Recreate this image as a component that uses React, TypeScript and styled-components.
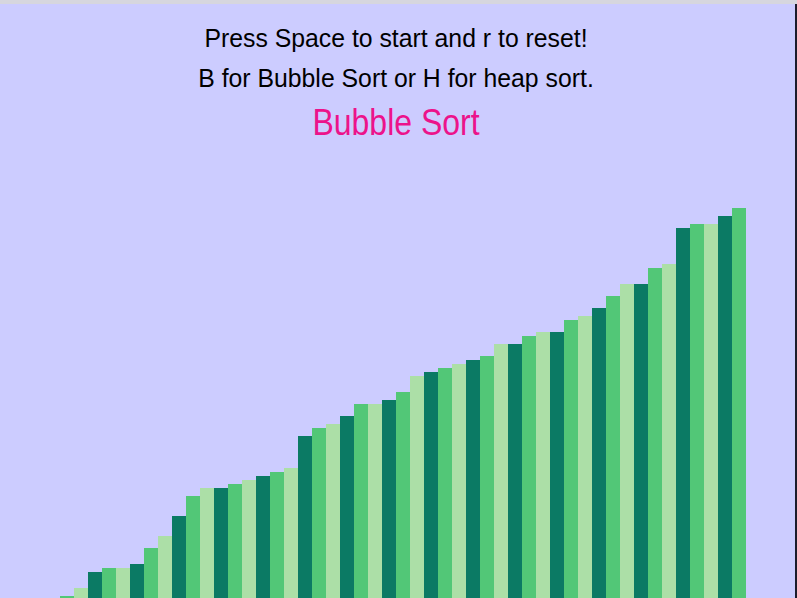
import React from "react";
import styled, { createGlobalStyle } from "styled-components";

const Global = createGlobalStyle`
  html, body { margin: 0; padding: 0; overflow: hidden; }
  body { font-family: "Liberation Sans", Arial, sans-serif; }
`;

const Page = styled.div`
  width: 797px;
  height: 598px;
  display: flex;
  flex-direction: column;
  background: #ccccff;
  overflow: hidden;
`;

const TopBand = styled.div`
  height: 4px;
  flex: none;
  background: #d6d6de;
`;

const Main = styled.div`
  flex: 1;
  display: flex;
  min-height: 0;
`;

const Canvas = styled.div`
  width: 795px;
  flex: none;
  display: flex;
  flex-direction: column;
  min-height: 0;
`;

const RightEdge = styled.div`
  width: 2px;
  flex: none;
  background: #1c1c2c;
`;

const Header = styled.div`
  padding: 15px 3px 0 0;
  display: flex;
  flex-direction: column;
  align-items: center;
  flex: none;
`;

const Line = styled.div`
  font-size: 24.8px;
  line-height: 40px;
  color: #000;
  white-space: nowrap;
  transform: scaleY(1.04);
`;

const Title = styled.div`
  font-size: 32px;
  line-height: 47px;
  color: #ec138b;
  white-space: nowrap;
  transform: scaleY(1.16);
`;

const Chart = styled.div`
  flex: 1;
  display: flex;
  align-items: flex-end;
  padding-left: 4px;
  min-height: 0;
  overflow: hidden;
`;

const palette = ["#0b7a64", "#52c777", "#acdfa7"];

const Bar = styled.div<{ $tone: number }>`
  width: 14px;
  flex: none;
  background: ${(p) => palette[p.$tone]};
`;

const tops = [
  598, 598, 598, 598, 596, 588, 572, 568, 568, 564, 548, 536, 516, 496, 488,
  488, 484, 480, 476, 472, 468, 436, 428, 424, 416, 404, 404, 400, 392, 376,
  372, 368, 364, 360, 356, 344, 344, 336, 332, 332, 320, 316, 308, 296, 284,
  284, 268, 264, 228, 224, 224, 216, 208,
];

export default function App() {
  return (
    <>
      <Global />
      <Page>
        <TopBand />
        <Main>
          <Canvas>
            <Header>
              <Line>Press Space to start and r to reset!</Line>
              <Line>B for Bubble Sort or H for heap sort.</Line>
              <Title>Bubble Sort</Title>
            </Header>
            <Chart>
              {tops.map((t, i) => (
                <Bar key={i} $tone={i % 3} style={{ height: `${598 - t}px` }} />
              ))}
            </Chart>
          </Canvas>
          <RightEdge />
        </Main>
      </Page>
    </>
  );
}
